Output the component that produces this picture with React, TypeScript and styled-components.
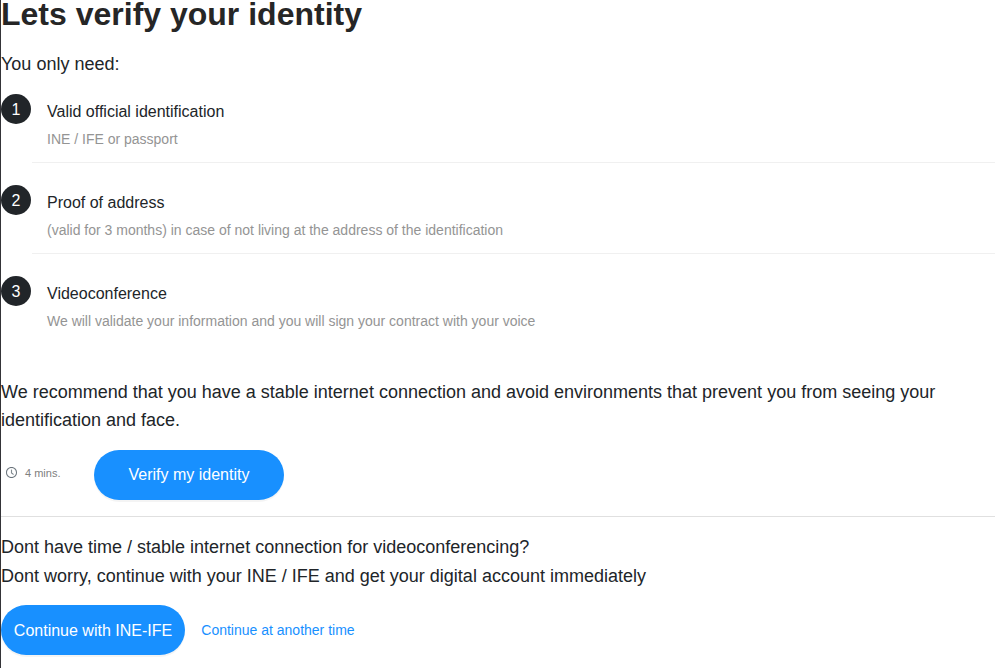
import React from "react";
import styled, { createGlobalStyle } from "styled-components";

const Global = createGlobalStyle`
  *, *::before, *::after { box-sizing: border-box; }
  html, body { margin: 0; padding: 0; background: #fff; }
  body { font-family: "Liberation Sans", Arial, sans-serif; color: #212529; }
`;

const Page = styled.main`
  height: 668px;
  border-left: 1px solid #343438;
`;

const Title = styled.h1`
  margin: 0;
  padding-bottom: 6px;
  font-size: 32px;
  line-height: 28px;
  font-weight: 700;
  color: #262626;
`;

const Text = styled.p<{ $top: number; $line?: number }>`
  margin: 0;
  padding-top: ${(p) => p.$top}px;
  font-size: 18px;
  line-height: ${(p) => p.$line ?? 28}px;
`;

const Steps = styled.ol`
  list-style: none;
  margin: 16px 0 0;
  padding: 0;
`;

const Step = styled.li`
  display: flex;
  height: 91px;
`;

const Badge = styled.span`
  flex: none;
  width: 30px;
  height: 30px;
  border-radius: 50%;
  background: #212529;
  color: #fff;
  font-size: 16px;
  line-height: 32px;
  text-align: center;
`;

const StepBody = styled.div<{ $line: boolean }>`
  flex: 1;
  height: 69px;
  margin-left: 1px;
  padding: 6px 0 0 15px;
  border-bottom: 1px solid ${(p) => (p.$line ? "#f0f0f0" : "transparent")};
`;

const StepTitle = styled.div`
  font-size: 16px;
  line-height: 24px;
`;

const StepNote = styled.div`
  margin-top: 4px;
  font-size: 14px;
  line-height: 22px;
  color: #949494;
`;

const Row = styled.div<{ $top: number }>`
  display: flex;
  align-items: center;
  height: 50px;
  margin-top: ${(p) => p.$top}px;
`;

const Duration = styled.div`
  display: flex;
  align-items: center;
  gap: 8px;
  width: 93px;
  padding: 0 0 4px 5px;
  font-size: 11px;
  line-height: 16px;
  color: #808080;
`;

const ClockIcon = styled.svg`
  display: block;
  width: 11px;
  height: 11px;
  margin-bottom: 1px;
  color: #6c757d;
`;

const Button = styled.button<{ $width: number; $drop?: number }>`
  width: ${(p) => p.$width}px;
  height: 50px;
  padding: ${(p) => p.$drop ?? 0}px 0 0;
  border: 0;
  border-radius: 25px;
  background: #1890ff;
  color: #fff;
  font: 16px "Liberation Sans", Arial, sans-serif;
  box-shadow: 0 2px 0 rgba(0, 0, 0, 0.045);
`;

const Divider = styled.hr`
  height: 1px;
  margin: 16px 0 0;
  border: 0;
  background: #e0e0e0;
`;

const LinkButton = styled.a`
  margin-left: 16.3px;
  font-size: 14px;
  color: #1890ff;
`;

const steps = [
  ["Valid official identification", "INE / IFE or passport"],
  ["Proof of address", "(valid for 3 months) in case of not living at the address of the identification"],
  ["Videoconference", "We will validate your information and you will sign your contract with your voice"],
];

const Clock = () => (
  <ClockIcon viewBox="64 64 896 896" fill="currentColor" stroke="currentColor" strokeWidth="12">
    <path d="M512 64C264.600 64 64 264.600 64 512s200.600 448 448 448 448-200.600 448-448S759.400 64 512 64zm0 820c-205.400 0-372-166.600-372-372s166.600-372 372-372 372 166.600 372 372-166.600 372-372 372z" />
    <path d="M686.700 638.600L544.100 535.500V288c0-4.400-3.600-8-8-8H488c-4.400 0-8 3.600-8 8v275.400c0 2.600 1.200 5 3.300 6.500l165.400 120.600c3.600 2.600 8.600 1.800 11.200-1.700l28.600-39c2.600-3.700 1.800-8.700-1.800-11.200z" />
  </ClockIcon>
);

export default function App() {
  return (
    <>
      <Global />
      <Page>
        <Title>Lets verify your identity</Title>
        <Text $top={16}>You only need:</Text>
        <Steps>
          {steps.map(([title, note], i) => (
            <Step key={title}>
              <Badge>{i + 1}</Badge>
              <StepBody $line={i < steps.length - 1}>
                <StepTitle>{title}</StepTitle>
                <StepNote>{note}</StepNote>
              </StepBody>
            </Step>
          ))}
        </Steps>
        <Text $top={11}>
          We recommend that you have a stable internet connection and avoid environments that prevent you from seeing
          your identification and face.
        </Text>
        <Row $top={16}>
          <Duration>
            <Clock />
            4 mins.
          </Duration>
          <Button $width={190}>Verify my identity</Button>
        </Row>
        <Divider />
        <Text $top={16} $line={29}>
          Dont have time / stable internet connection for videoconferencing?
          <br />
          Dont worry, continue with your INE / IFE and get your digital account immediately
        </Text>
        <Row $top={14}>
          <Button $width={184} $drop={2}>
            Continue with INE-IFE
          </Button>
          <LinkButton>Continue at another time</LinkButton>
        </Row>
      </Page>
    </>
  );
}
